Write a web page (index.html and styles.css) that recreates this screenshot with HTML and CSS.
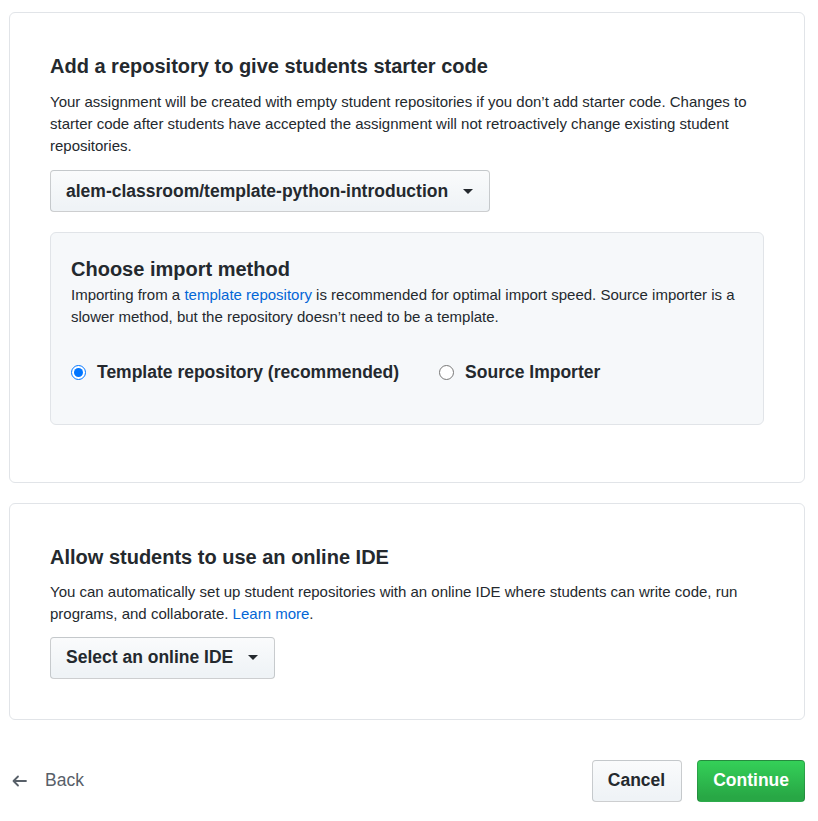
FILE: index.html
```html
<!DOCTYPE html>
<html lang="en">
<head>
<meta charset="utf-8">
<title>Starter code</title>
<link rel="stylesheet" href="styles.css">
</head>
<body>
<div class="page">
  <section class="card">
    <h2 class="card-title">Add a repository to give students starter code</h2>
    <p class="card-text">Your assignment will be created with empty student repositories if you don’t add starter code. Changes to starter code after students have accepted the assignment will not retroactively change existing student repositories.</p>
    <button class="btn btn-select" type="button">alem-classroom/template-python-introduction <span class="caret"></span></button>
    <div class="subbox">
      <h3 class="subbox-title">Choose import method</h3>
      <p class="card-text">Importing from a <a href="#" class="link">template repository</a> is recommended for optimal import speed. Source importer is a slower method, but the repository doesn’t need to be a template.</p>
      <div class="radios">
        <label class="radio"><input type="radio" name="m" checked> Template repository (recommended)</label>
        <label class="radio"><input type="radio" name="m"> Source Importer</label>
      </div>
    </div>
  </section>

  <section class="card card-ide">
    <h2 class="card-title">Allow students to use an online IDE</h2>
    <p class="card-text">You can automatically set up student repositories with an online IDE where students can write code, run programs, and collaborate. <a href="#" class="link">Learn more</a>.</p>
    <button class="btn btn-select" type="button">Select an online IDE <span class="caret"></span></button>
  </section>

  <div class="footer">
    <a href="#" class="back">
      <svg class="back-icon" width="16" height="16" viewBox="0 0 16 16"><path fill="none" stroke="currentColor" stroke-width="1.8" stroke-linecap="round" stroke-linejoin="round" d="M15 8H2.5M7 3.5L2.5 8L7 12.5"/></svg>
      <span>Back</span>
    </a>
    <div class="actions">
      <button class="btn btn-cancel" type="button">Cancel</button>
      <button class="btn btn-primary" type="button">Continue</button>
    </div>
  </div>
</div>
</body>
</html>
```

FILE: styles.css
```css
* { box-sizing: border-box; }
html, body { margin: 0; padding: 0; background: #fff; }
body {
  font-family: "Liberation Sans", Arial, sans-serif;
  color: #24292e;
  font-size: 15px;
}
.page {
  width: 796px;
  margin-left: 9px;
  padding-top: 12px;
}
.card {
  border: 1px solid #e1e4e8;
  border-radius: 6px;
  padding: 40px 40px 40px 40px;
  background: #fff;
}
.card-ide { margin-top: 20px; }
.card-title {
  margin: 0 0 12px;
  font-size: 20px;
  line-height: 26px;
  font-weight: 700;
}
.card-ide .card-title { margin-bottom: 11px; }
.card-ide .btn-select { margin-top: 12px; }
.card-text {
  margin: 0;
  font-size: 15px;
  line-height: 22px;
}
.link { color: #0366d6; text-decoration: none; }
.btn {
  font-family: inherit;
  font-weight: 700;
  font-size: 17.5px;
  color: #24292e;
  border: 1px solid rgba(27,31,35,.2);
  border-radius: 4px;
  background: linear-gradient(#fafbfc, #eff3f6 90%);
  height: 42px;
  padding: 0 16px 0 15px;
  cursor: pointer;
  display: inline-flex;
  align-items: center;
}
.btn-select { margin-top: 13px; }
.caret {
  display: inline-block;
  width: 0; height: 0;
  margin-left: 15px;
  border-left: 5px solid transparent;
  border-right: 5px solid transparent;
  border-top: 5px solid #24292e;
}
.subbox {
  margin-top: 20px;
  margin-bottom: 17px;
  background: #f6f8fa;
  border: 1px solid #e1e4e8;
  border-radius: 6px;
  padding: 20.5px 20px 38px;
}
.subbox-title {
  margin: 0;
  font-size: 20px;
  line-height: 30px;
  font-weight: 700;
}
.radios {
  display: flex;
  gap: 40px;
  margin-top: 31px;
}
.radio {
  display: flex;
  align-items: center;
  font-size: 17.5px;
  font-weight: 700;
  line-height: 27px;
}
.radio input { margin: 0 11px 0 0; width: 15px; height: 15px; }
.footer {
  margin-top: 40px;
  display: flex;
  justify-content: space-between;
  align-items: center;
}
.back {
  display: flex;
  align-items: center;
  gap: 18px;
  margin-left: 2px;
  color: #586069;
  font-size: 17.5px;
  text-decoration: none;
}
.back-icon { display: block; }
.actions { display: flex; gap: 15px; }
.btn-cancel { padding: 0 16px 0 15px; }
.btn-primary {
  color: #fff;
  background: linear-gradient(#34d058, #28a745 90%);
  border-color: rgba(27,31,35,.2);
  padding: 0 15px;
}
```
